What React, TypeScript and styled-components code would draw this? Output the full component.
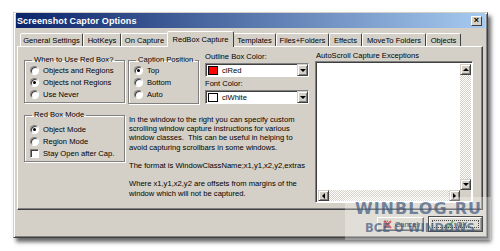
import React from "react";
import styled, { createGlobalStyle } from "styled-components";

const Global = createGlobalStyle`
  html, body { margin: 0; padding: 0; background: #fff; }
  body { font-family: "Liberation Sans", Arial, sans-serif; color: #000; }
  * { box-sizing: border-box; }
`;

const FS = "7.6px";

const Page = styled.div`
  position: relative;
  width: 500px;
  height: 251px;
  padding: 12px 0 0 13px;
  overflow: hidden;
`;

const Window = styled.div`
  width: 475px;
  height: 226px;
  background: #d4d0c8;
  border: 1px solid;
  border-color: #d4d0c8 #404040 #404040 #d4d0c8;
  box-shadow: inset 1px 1px 0 #fff, inset -1px -1px 0 #808080,
    3px 4px 4px rgba(0, 0, 0, 0.6);
  padding: 0 2px 2px 2px;
  display: flex;
  flex-direction: column;
`;

const TitleBar = styled.div`
  height: 15px;
  background: linear-gradient(to right, #0a246a, #a6caf0);
  display: flex;
  align-items: center;
  justify-content: space-between;
  padding: 0 2px 0 1px;
`;

const Title = styled.span`
  color: #fff;
  font-weight: bold;
  font-size: 9px;
  letter-spacing: 0.1px;
`;

const CloseButton = styled.div`
  width: 11px;
  height: 10px;
  background: #d4d0c8;
  border: 1px solid;
  border-color: #fff #404040 #404040 #fff;
  display: flex;
  align-items: center;
  justify-content: center;
  font-size: 9px;
  font-weight: bold;
  line-height: 1;
  margin-right: 1px;
`;

const TabStrip = styled.div`
  display: flex;
  align-items: flex-end;
  height: 18px;
  padding-left: 4px;
  position: relative;
  z-index: 1;
`;

const Tab = styled.div<{ $w: number; $active?: boolean }>`
  width: ${(p) => p.$w}px;
  height: ${(p) => (p.$active ? 16 : 13)}px;
  margin: ${(p) => (p.$active ? "0 -1px -1px -1px" : "0")};
  background: #d4d0c8;
  border: 1px solid;
  border-bottom: none;
  border-color: #fff #404040 transparent #fff;
  border-radius: 2px 2px 0 0;
  font-size: ${FS};
  display: flex;
  align-items: ${(p) => (p.$active ? "flex-start" : "center")};
  padding-top: ${(p) => (p.$active ? 3 : 0)}px;
  justify-content: center;
  white-space: nowrap;
  position: relative;
  z-index: ${(p) => (p.$active ? 2 : 0)};
`;

const Panel = styled.div`
  width: 466px;
  height: 164px;
  margin-left: 1px;
  border: 1px solid;
  border-color: #fff #404040 #404040 #fff;
  box-shadow: inset -1px -1px 0 #808080;
  padding: 9px 6px 6px 6px;
  display: grid;
  grid-template-columns: 101px 181px 161px;
  column-gap: 3px;
`;

const LeftCol = styled.div`
  display: flex;
  flex-direction: column;
  gap: 8px;
`;

const MidCol = styled.div`
  display: flex;
  flex-direction: column;
  gap: 11px;
`;

const MidTop = styled.div`
  display: flex;
  gap: 6px;
`;

const RightCol = styled.div`
  display: flex;
  flex-direction: column;
  margin-left: 3px;
  margin-top: -5px;
`;

const Group = styled.fieldset<{ $w?: number; $pt?: number }>`
  margin: 0;
  width: ${(p) => (p.$w ? `${p.$w}px` : "auto")};
  border: 1px solid #808080;
  box-shadow: 1px 1px 0 #fff, inset 1px 1px 0 #fff;
  padding: ${(p) => p.$pt ?? 0}px 0 2px 5px;
  display: flex;
  flex-direction: column;
`;

const Legend = styled.legend`
  font-size: ${FS};
  padding: 0 2px;
  margin-left: 2px;
  line-height: 8px;
  height: 8px;
`;

const OptionRow = styled.div`
  display: flex;
  align-items: center;
  gap: 4px;
  height: 12px;
  font-size: ${FS};
  white-space: nowrap;
`;

const RadioDot = styled.span<{ $on?: boolean }>`
  width: 9px;
  height: 9px;
  flex: none;
  border-radius: 50%;
  background: #fff;
  border: 1px solid;
  border-color: #808080 #fff #fff #808080;
  box-shadow: inset 1px 1px 0 #404040;
  display: flex;
  align-items: center;
  justify-content: center;
  &::after {
    content: "";
    width: 3px;
    height: 3px;
    border-radius: 50%;
    background: ${(p) => (p.$on ? "#000" : "transparent")};
  }
`;

const CheckBox = styled.span`
  width: 9px;
  height: 9px;
  flex: none;
  background: #fff;
  border: 1px solid;
  border-color: #808080 #fff #fff #808080;
  box-shadow: inset 1px 1px 0 #404040;
`;

const ComboCol = styled.div`
  flex: 1;
  display: flex;
  flex-direction: column;
  margin-top: -4px;
`;

const FieldLabel = styled.div<{ $mt?: number }>`
  font-size: ${FS};
  line-height: 9px;
  margin-top: ${(p) => p.$mt ?? 0}px;
  height: 9px;
`;

const Combo = styled.div`
  height: 14px;
  background: #fff;
  border: 1px solid;
  border-color: #808080 #fff #fff #808080;
  box-shadow: inset 1px 1px 0 #404040;
  display: flex;
  align-items: center;
  padding: 0 0 0 2px;
  margin-top: 2px;
`;

const Swatch = styled.span<{ $c: string }>`
  width: 10px;
  height: 9px;
  background: ${(p) => p.$c};
  border: 1px solid #000;
  flex: none;
`;

const ComboText = styled.span`
  font-size: ${FS};
  margin-left: 4px;
  flex: 1;
`;

const ArrowBtn = styled.span`
  width: 11px;
  height: 12px;
  background: #d4d0c8;
  border: 1px solid;
  border-color: #d4d0c8 #404040 #404040 #d4d0c8;
  box-shadow: inset 1px 1px 0 #fff, inset -1px -1px 0 #808080;
  display: flex;
  align-items: center;
  justify-content: center;
  &::after {
    content: "";
    border-left: 3px solid transparent;
    border-right: 3px solid transparent;
    border-top: 3px solid #000;
  }
`;

const Info = styled.div`
  font-size: ${FS};
  line-height: 9.2px;
  padding-left: 1px;
  display: flex;
  flex-direction: column;
  gap: 9.2px;
  white-space: nowrap;
`;

const ListLabel = styled.div`
  font-size: ${FS};
  height: 10px;
  line-height: 9px;
  padding-left: 1px;
`;

const ListBox = styled.div`
  flex: 1;
  background: #fff;
  border: 1px solid;
  border-color: #808080 #fff #fff #808080;
  box-shadow: inset 1px 1px 0 #404040;
  display: grid;
  grid-template-columns: 1fr 11px;
  grid-template-rows: 1fr 11px;
  padding: 2px 1px 1px 2px;
`;

const Track = styled.div<{ $dir: "v" | "h" }>`
  display: flex;
  flex-direction: ${(p) => (p.$dir === "v" ? "column" : "row")};
  justify-content: space-between;
  background: repeating-conic-gradient(#d4d0c8 0 25%, #fff 0 50%) 0 0 / 2px 2px;
`;

const SBtn = styled.span<{ $arrow: "up" | "down" | "left" | "right" }>`
  width: 11px;
  height: 11px;
  background: #d4d0c8;
  border: 1px solid;
  border-color: #d4d0c8 #404040 #404040 #d4d0c8;
  box-shadow: inset 1px 1px 0 #fff, inset -1px -1px 0 #808080;
  display: flex;
  align-items: center;
  justify-content: center;
  &::after {
    content: "";
    ${(p) =>
      p.$arrow === "up"
        ? "border-left:3px solid transparent;border-right:3px solid transparent;border-bottom:3px solid #000;"
        : p.$arrow === "down"
        ? "border-left:3px solid transparent;border-right:3px solid transparent;border-top:3px solid #000;"
        : p.$arrow === "left"
        ? "border-top:3px solid transparent;border-bottom:3px solid transparent;border-right:3px solid #000;"
        : "border-top:3px solid transparent;border-bottom:3px solid transparent;border-left:3px solid #000;"}
  }
`;

const Corner = styled.div`
  background: #d4d0c8;
`;

const Footer = styled.div`
  display: flex;
  justify-content: flex-end;
  gap: 5px;
  padding: 7px 3px 0 0;
`;

const Button = styled.div<{ $def?: boolean; $w: number }>`
  width: ${(p) => p.$w}px;
  height: 14px;
  background: #d4d0c8;
  border: 1px solid;
  border-color: #fff #404040 #404040 #fff;
  box-shadow: inset -1px -1px 0 #808080
    ${(p) => (p.$def ? ", 0 0 0 1px #000" : "")};
  outline: ${(p) => (p.$def ? "1px dotted #000" : "none")};
  outline-offset: -4px;
  display: flex;
  align-items: center;
  justify-content: center;
  gap: 3px;
  font-size: ${FS};
`;

const Watermark = styled.div`
  position: absolute;
  left: 345px;
  top: 197px;
  width: 146px;
  height: 43px;
  background: rgba(255, 255, 255, 0.3);
  display: flex;
  flex-direction: column;
  align-items: flex-start;
  font-family: "DejaVu Sans", "Liberation Sans", sans-serif;
  font-weight: bold;
  color: rgba(62, 88, 125, 0.7);
  pointer-events: none;
  white-space: nowrap;
`;

const WmBig = styled.div`
  font-size: 16px;
  line-height: 16px;
  letter-spacing: 1px;
  margin: 4px 0 0 10px;
`;

const WmSmall = styled.div`
  font-size: 11.5px;
  line-height: 12px;
  margin: 5px 0 0 20px;
`;

const tabs: { label: string; w: number; active?: boolean }[] = [
  { label: "General Settings", w: 63 },
  { label: "HotKeys", w: 38 },
  { label: "On Capture", w: 47 },
  { label: "RedBox Capture", w: 67, active: true },
  { label: "Templates", w: 43 },
  { label: "Files+Folders", w: 53 },
  { label: "Effects", w: 33 },
  { label: "MoveTo Folders", w: 64 },
  { label: "Objects", w: 35 },
];

const Radio = ({ label, on }: { label: string; on?: boolean }) => (
  <OptionRow>
    <RadioDot $on={on} />
    {label}
  </OptionRow>
);

const CancelIcon = () => (
  <svg width="9" height="9" viewBox="0 0 9 9">
    <path d="M1 1 L8 8 M8 1 L1 8" stroke="#d02020" strokeWidth="2" />
  </svg>
);

const OkIcon = () => (
  <svg width="10" height="9" viewBox="0 0 10 9">
    <path d="M1 5 L4 8 L9 1" stroke="#20a030" strokeWidth="2" fill="none" />
  </svg>
);

export default function App() {
  return (
    <Page>
      <Global />
      <Window>
        <TitleBar>
          <Title>Screenshot Captor Options</Title>
          <CloseButton>×</CloseButton>
        </TitleBar>
        <TabStrip>
          {tabs.map((t) => (
            <Tab key={t.label} $w={t.w} $active={t.active}>
              {t.label}
            </Tab>
          ))}
        </TabStrip>
        <Panel>
          <LeftCol>
            <Group>
              <Legend>When to Use Red Box?</Legend>
              <Radio label="Objects and Regions" />
              <Radio label="Objects not Regions" on />
              <Radio label="Use Never" />
            </Group>
            <Group $pt={4}>
              <Legend>Red Box Mode</Legend>
              <Radio label="Object Mode" on />
              <Radio label="Region Mode" />
              <OptionRow>
                <CheckBox />
                Stay Open after Cap.
              </OptionRow>
            </Group>
          </LeftCol>
          <MidCol>
            <MidTop>
              <Group $w={71}>
                <Legend>Caption Position</Legend>
                <Radio label="Top" on />
                <Radio label="Bottom" />
                <Radio label="Auto" />
              </Group>
              <ComboCol>
                <FieldLabel>Outline Box Color:</FieldLabel>
                <Combo>
                  <Swatch $c="#ff0000" />
                  <ComboText>clRed</ComboText>
                  <ArrowBtn />
                </Combo>
                <FieldLabel $mt={2}>Font Color:</FieldLabel>
                <Combo>
                  <Swatch $c="#ffffff" />
                  <ComboText>clWhite</ComboText>
                  <ArrowBtn />
                </Combo>
              </ComboCol>
            </MidTop>
            <Info>
              <div>
                In the window to the right you can specify custom
                <br />
                scrolling window capture instructions for various
                <br />
                window classes.&nbsp; This can be useful in helping to
                <br />
                avoid capturing scrollbars in some windows.
              </div>
              <div>The format is WindowClassName;x1,y1,x2,y2,extras</div>
              <div>
                Where x1,y1,x2,y2 are offsets from margins of the
                <br />
                window which will not be captured.
              </div>
            </Info>
          </MidCol>
          <RightCol>
            <ListLabel>AutoScroll Capture Exceptions</ListLabel>
            <ListBox>
              <div />
              <Track $dir="v">
                <SBtn $arrow="up" />
                <SBtn $arrow="down" />
              </Track>
              <Track $dir="h">
                <SBtn $arrow="left" />
                <SBtn $arrow="right" />
              </Track>
              <Corner />
            </ListBox>
          </RightCol>
        </Panel>
        <Footer>
          <Button $w={47}>
            <CancelIcon />
            Cancel
          </Button>
          <Button $def $w={53}>
            <OkIcon />
            OK
          </Button>
        </Footer>
      </Window>
      <Watermark>
        <WmBig>WINBLOG.RU</WmBig>
        <WmSmall>ВСЁ О WINDOWS</WmSmall>
      </Watermark>
    </Page>
  );
}
